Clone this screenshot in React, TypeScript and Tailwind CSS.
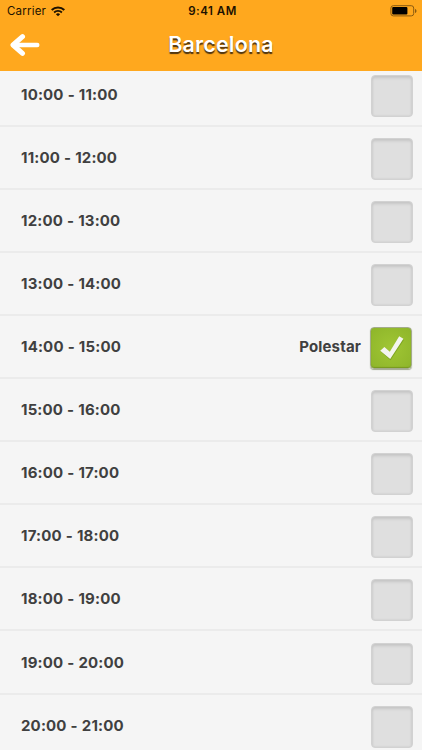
import React, { useState } from "react";

interface Slot {
  time: string;
  bookedBy?: string;
}

const SLOTS: Slot[] = [
  { time: "10:00 - 11:00" },
  { time: "11:00 - 12:00" },
  { time: "12:00 - 13:00" },
  { time: "13:00 - 14:00" },
  { time: "14:00 - 15:00", bookedBy: "Polestar" },
  { time: "15:00 - 16:00" },
  { time: "16:00 - 17:00" },
  { time: "17:00 - 18:00" },
  { time: "18:00 - 19:00" },
  { time: "19:00 - 20:00" },
  { time: "20:00 - 21:00" },
];

function WifiIcon() {
  return (
    <svg viewBox="0 0 14 11" className="h-[11px] w-[14px]" fill="none" stroke="#1c1200">
      <path d="M0.7 4a8.9 8.9 0 0 1 12.6 0" strokeWidth="2" />
      <path d="M3.1 6.5a5.5 5.5 0 0 1 7.8 0" strokeWidth="1.8" />
      <path d="M7 10.3L4.9 8.2a3 3 0 0 1 4.2 0z" fill="#1c1200" stroke="none" />
    </svg>
  );
}

function BatteryIcon() {
  return (
    <svg viewBox="0 0 27 12" className="h-3 w-[27px]">
      <rect x="0.9" y="0.7" width="22.8" height="10.2" rx="2.4" fill="none" stroke="#8a5a10" strokeWidth="1" />
      <rect x="2.2" y="2" width="15.2" height="7.6" rx="1" fill="#000" />
      <path d="M25 4v4c0.9-0.3 1.5-1.1 1.5-2s-0.6-1.7-1.5-2z" fill="#8a5a10" />
    </svg>
  );
}

function BackArrow() {
  return (
    <svg viewBox="0 0 30 22" className="h-[22px] w-[30px]" fill="none" stroke="#fff" strokeLinecap="round" strokeLinejoin="round">
      <path d="M12.5 2.7L3 11l9.5 8.3" strokeWidth="5" />
      <path d="M4 11h23.3" strokeWidth="4.4" />
    </svg>
  );
}

function CheckMark() {
  return (
    <svg viewBox="0 0 42 42" className="-m-px size-[42px]">
      <path d="M10.6 24.6l4-3.7 5.2 4.6L29.8 10.4l4 2.6L20.5 33.2z" fill="#5f8a12" opacity="0.5" />
      <path d="M10.2 23.8l4.2-3.8 5.4 4.7L29.2 9.2l4.2 2.6L20.2 32z" fill="#f4f5ef" />
    </svg>
  );
}

function SlotRow({ slot, checked, onToggle }: { slot: Slot; checked: boolean; onToggle: () => void }) {
  return (
    <li className="flex h-[63.1px] shrink-0 items-center border-b-2 border-[#ebebeb] pl-[21px] pr-[9px]">
      <span className="mt-px text-[15px] leading-5 font-bold tracking-[0.16px] [word-spacing:0.3px]">{slot.time}</span>
      {slot.bookedBy && (
        <span className="mt-px ml-auto text-[15px] leading-5 font-bold tracking-[0.15px]">{slot.bookedBy}</span>
      )}
      {checked ? (
        <button
          onClick={onToggle}
          aria-label={slot.time}
          className="mt-[3px] mr-px ml-[9px] size-[42px] rounded-[4px] border border-[#a3ab8c] bg-radial from-[#a0c634] to-[#8eb52a] shadow-[0_1px_1px_#a0a88f,inset_0_-1px_1px_#789a20]"
        >
          <CheckMark />
        </button>
      ) : (
        <button
          onClick={onToggle}
          aria-label={slot.time}
          className="mt-[3px] ml-auto size-[42px] rounded-[4px] border border-[#d2d2d2] bg-[#dfdfdf] shadow-[inset_0_2px_3px_#c6c6c6,inset_0_0_2px_#c6c6c6]"
        />
      )}
    </li>
  );
}

export default function App() {
  const [selected, setSelected] = useState<string[]>(["14:00 - 15:00"]);

  const handleToggle = (time: string) => {
    setSelected((prev) => (prev.includes(time) ? prev.filter((t) => t !== time) : [...prev, time]));
  };

  return (
    <div className="flex h-[750px] w-[422px] flex-col overflow-hidden bg-[#f5f5f5] font-['Inter','Liberation_Sans',sans-serif] text-[#404040]">
      <header className="h-[71px] shrink-0 bg-[#ffa81e]">
        {/* Status bar */}
        <div className="grid h-[22px] grid-cols-3 items-center pr-[5px] pl-[7px] text-[11.5px] text-[#1c1200]">
          <div className="flex items-center gap-[5px]">
            <span className="pt-px tracking-[0.2px]">Carrier</span>
            <WifiIcon />
          </div>
          <span className="pt-px pl-px text-center font-semibold tracking-[0.5px]">9:41 AM</span>
          <div className="flex justify-end">
            <BatteryIcon />
          </div>
        </div>

        {/* Title bar */}
        <div className="grid h-[45px] grid-cols-[60px_1fr_40px] items-center">
          <button aria-label="Back" className="pl-[10px]">
            <BackArrow />
          </button>
          <h1 className="text-center text-[21.5px] font-semibold tracking-[0.15px] text-white [text-shadow:0_1.5px_1px_#4b3210]">
            Barcelona
          </h1>
        </div>
      </header>

      <main className="min-h-0 flex-1 overflow-hidden">
        <ul className="-mt-[7.4px] flex flex-col">
          {SLOTS.map((slot) => (
            <SlotRow
              key={slot.time}
              slot={slot}
              checked={selected.includes(slot.time)}
              onToggle={() => handleToggle(slot.time)}
            />
          ))}
        </ul>
      </main>
    </div>
  );
}
